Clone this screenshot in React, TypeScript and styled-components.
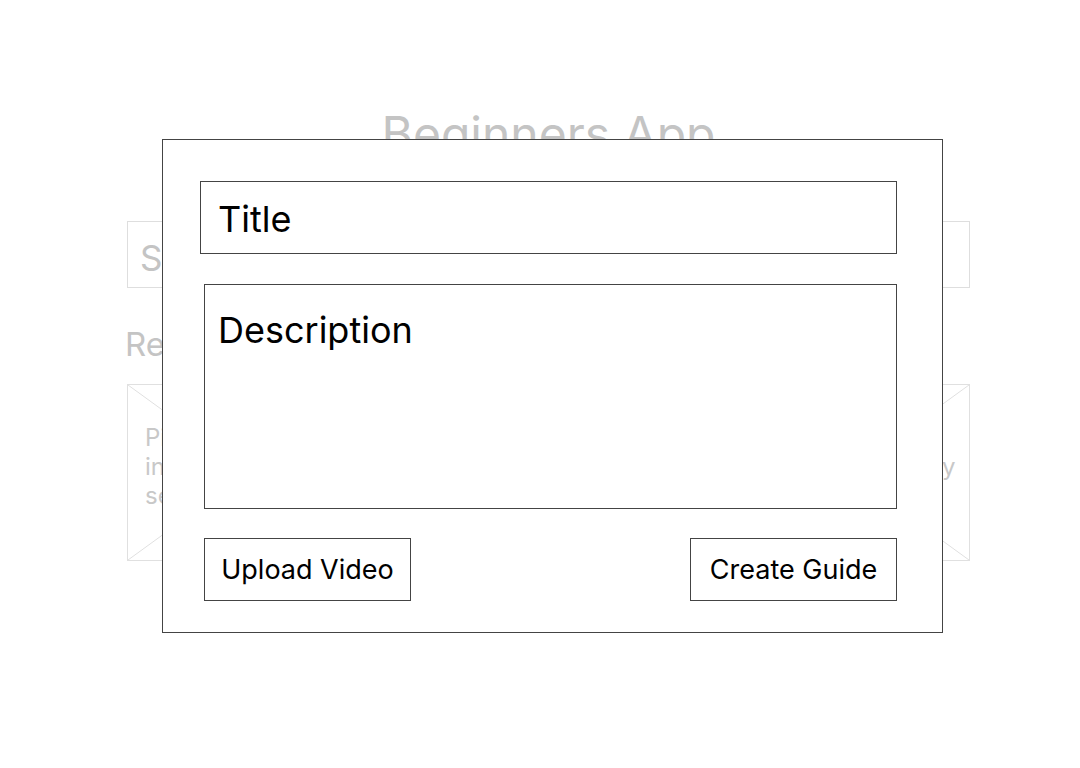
import React from "react";
import styled, { createGlobalStyle } from "styled-components";

const Global = createGlobalStyle`
  html, body { margin: 0; padding: 0; background: #ffffff; }
  body { font-family: Inter, "Noto Sans", sans-serif; }
  * { box-sizing: border-box; }
`;

const Screen = styled.div`
  position: relative;
  width: 1080px;
  height: 768px;
  overflow: hidden;
  background: #ffffff;
`;

const Page = styled.div`
  width: 843px;
  margin-left: 127px;
  padding-top: 105px;
  display: flex;
  flex-direction: column;
  color: #c4c4c4;
`;

const AppTitle = styled.h1`
  margin: 0;
  font-size: 48px;
  font-weight: 400;
  line-height: 58px;
  text-align: center;
  color: #c4c4c4;
`;

const Search = styled.div`
  margin-top: 58px;
  height: 67px;
  border: 1px solid #dedede;
  padding: 6px 12px 0;
  display: flex;
  align-items: center;
  font-size: 35px;
  color: #c4c4c4;
`;

const SectionHeading = styled.h2`
  margin: 36px 0 0 -2px;
  font-size: 33px;
  font-weight: 400;
  line-height: 40px;
  color: #c4c4c4;
`;

const CardRow = styled.div`
  margin-top: 20px;
  display: flex;
  justify-content: space-between;
`;

const Card = styled.div`
  position: relative;
  width: 243px;
  height: 177px;
  border: 1px solid #e0e0e0;
  padding: 38px 16px 0 17px;
  font-size: 24px;
  line-height: 29px;
  color: #c8c8c8;
`;

const CardCross = styled.svg`
  position: absolute;
  inset: 0;
  width: 100%;
  height: 100%;
`;

const CardText = styled.p`
  position: relative;
  margin: 0;
`;

const CardLine = styled.span`
  display: block;
  white-space: nowrap;
`;

const Modal = styled.div`
  position: absolute;
  left: 162px;
  top: 139px;
  width: 781px;
  height: 494px;
  background: #ffffff;
  border: 1px solid #444444;
  padding: 41px 45px 31px 41px;
  display: flex;
  flex-direction: column;
`;

const TitleField = styled.input`
  display: block;
  margin: 0 0 0 -4px;
  width: calc(100% + 4px);
  height: 73px;
  border: 1px solid #444444;
  border-radius: 0;
  padding: 2px 17px 0;
  font-family: Inter, "Noto Sans", sans-serif;
  font-size: 36px;
  color: #000000;
  background: #ffffff;
  outline: none;
  &::placeholder { color: #000000; opacity: 1; }
`;

const DescriptionField = styled.textarea`
  display: block;
  margin: 30px 0 0 0;
  width: 100%;
  height: 225px;
  border: 1px solid #444444;
  border-radius: 0;
  padding: 23px 13px;
  font-family: Inter, "Noto Sans", sans-serif;
  font-size: 36px;
  line-height: normal;
  color: #000000;
  background: #ffffff;
  resize: none;
  outline: none;
  &::placeholder { color: #000000; opacity: 1; }
`;

const Actions = styled.div`
  margin-top: 29px;
  display: flex;
  justify-content: space-between;
`;

const ActionButton = styled.button`
  width: 207px;
  height: 63px;
  border: 1px solid #444444;
  border-radius: 0;
  background: #ffffff;
  color: #000000;
  font-family: Inter, "Noto Sans", sans-serif;
  font-size: 27px;
  padding: 0;
  display: flex;
  align-items: center;
  justify-content: center;
  cursor: pointer;
`;

const Cross = () => (
  <CardCross viewBox="0 0 100 100" preserveAspectRatio="none">
    <line x1="0" y1="0" x2="100" y2="100" stroke="#e0e0e0" strokeWidth="1" vectorEffect="non-scaling-stroke" />
    <line x1="100" y1="0" x2="0" y2="100" stroke="#e0e0e0" strokeWidth="1" vectorEffect="non-scaling-stroke" />
  </CardCross>
);

const cards: string[][] = [
  ["Picking your", "instrument and", "setting up"],
  ["Learn the basic", "chords in under", "a single week"],
  ["Plan a routine", "practice every day", "with short songs"],
];

export default function App() {
  return (
    <>
      <Global />
      <Screen>
        <Page>
          <AppTitle>Beginners App</AppTitle>
          <Search>Search guides</Search>
          <SectionHeading>Recent Guides</SectionHeading>
          <CardRow>
            {cards.map((lines) => (
              <Card key={lines[0]}>
                <Cross />
                <CardText>
                  {lines.map((l) => (
                    <CardLine key={l}>{l}</CardLine>
                  ))}
                </CardText>
              </Card>
            ))}
          </CardRow>
        </Page>
        <Modal>
          <TitleField placeholder="Title" />
          <DescriptionField placeholder="Description" />
          <Actions>
            <ActionButton>Upload Video</ActionButton>
            <ActionButton>Create Guide</ActionButton>
          </Actions>
        </Modal>
      </Screen>
    </>
  );
}
